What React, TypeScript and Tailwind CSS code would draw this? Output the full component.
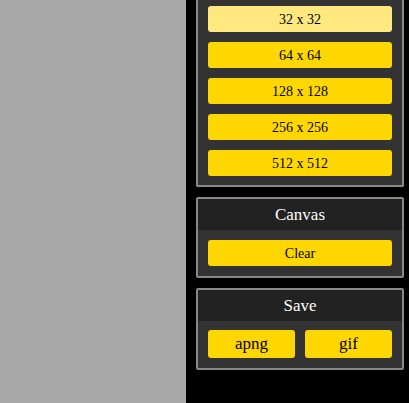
import React from 'react';

// Sizes shown in the (scrolled) size panel
const sizes = ['32 x 32', '64 x 64', '128 x 128', '256 x 256', '512 x 512'];

function Panel({ title, children, className = '' }: { title?: string; children: React.ReactNode; className?: string }) {
  return (
    <div className={`border-2 border-[#888] bg-[#333] rounded-[2px] ${className}`}>
      {title && (
        <div className="h-[31px] bg-[#222] text-white text-[17px] flex items-center justify-center">{title}</div>
      )}
      {children}
    </div>
  );
}

export default function App() {
  return (
    <div
      className="flex w-[409px] h-[403px] overflow-hidden"
      style={{ fontFamily: '"Liberation Serif", "DejaVu Serif", serif' }}
    >
      <div className="w-[186px] bg-[#a9a9a9]" />
      <div className="flex-1 bg-black pl-[10px] pr-[5px] flex flex-col gap-[10px]">
        {/* first panel is scrolled so its header is off-screen */}
        <Panel className="border-t-0 rounded-t-none">
          <div className="flex flex-col gap-[10px] px-[10px] pt-[6px] pb-[9px]">
            {sizes.map((s, i) => (
              <button
                key={s}
                className={`h-[26px] rounded-[3px] text-[14px] text-black ${i === 0 ? 'bg-[#ffe97f]' : 'bg-[#ffd700]'}`}
              >
                {s}
              </button>
            ))}
          </div>
        </Panel>

        <Panel title="Canvas">
          <div className="p-[10px]">
            <button className="w-full h-[26px] rounded-[3px] bg-[#ffd700] text-[14px] text-black">Clear</button>
          </div>
        </Panel>

        <Panel title="Save">
          <div className="px-[10px] pt-[9px] pb-[10px] flex gap-[10px]">
            <button className="flex-1 h-[28px] rounded-[3px] bg-[#ffd700] text-[17px] text-black">apng</button>
            <button className="flex-1 h-[28px] rounded-[3px] bg-[#ffd700] text-[17px] text-black">gif</button>
          </div>
        </Panel>
      </div>
    </div>
  );
}
